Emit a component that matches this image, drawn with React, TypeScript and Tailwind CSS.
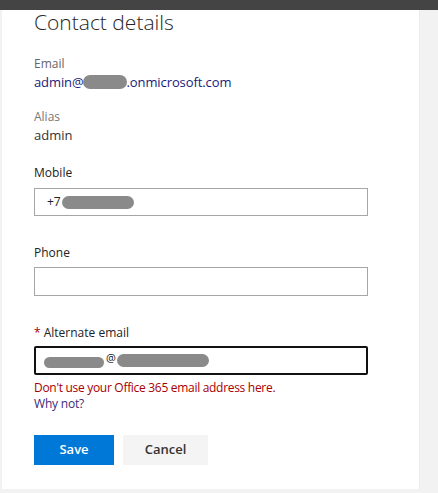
import React from "react";

const Blur = ({ className }: { className: string }) => (
  <span className={`inline-block rounded-full bg-[#8a8a8a] blur-[0.6px] ${className}`} />
);

export default function App() {
  return (
    <div className="w-[438px] h-[493px] bg-[#f2f2f2] flex flex-col overflow-hidden" style={{ fontFamily: '"Open Sans", "Noto Sans", sans-serif' }}>
      <div className="h-[10px] bg-[#444444] shrink-0" />
      <div className="ml-[2px] w-[418px] h-[479px] bg-white border-r border-[#ececec] pl-[32px] flex flex-col">
        <div className="text-[21px] font-light text-[#262626] leading-[24px] tracking-[0px]">Contact details</div>

        <div className="mt-[22px] text-[12px] leading-[16px] text-[#666]">Email</div>
        <div className="mt-[1px] text-[13px] leading-[18px] text-[#1a1a7a] flex items-center tracking-[-0.1px]">
          <span>admin@</span>
          <Blur className="w-[44px] h-[14px] ml-[-1px]" />
          <span>.onmicrosoft.com</span>
        </div>

        <div className="mt-[18px] text-[12px] leading-[16px] text-[#777]">Alias</div>
        <div className="mt-[1px] text-[13px] leading-[18px] text-[#333]">admin</div>

        <div className="mt-[21px] text-[12px] leading-[16px] text-[#222]">Mobile</div>
        <div className="mt-[7px] w-[334px] h-[28px] border border-[#a6a6a6] flex items-center pl-[12px] text-[12px] text-[#222]">
          <span>+7</span>
          <Blur className="w-[72px] h-[13px] ml-[1px]" />
        </div>

        <div className="mt-[29px] text-[12px] leading-[16px] text-[#222]">Phone</div>
        <div className="mt-[6px] w-[334px] h-[29px] border border-[#a6a6a6]" />

        <div className="mt-[29px] text-[12px] leading-[16px] text-[#222]">
          <span className="text-[#a80000]">*</span> Alternate email
        </div>
        <div className="mt-[5px] w-[334px] h-[29px] border-2 border-[#111] rounded-[2px] flex items-center pl-[8px] text-[11px] text-[#111]">
          <Blur className="w-[60px] h-[11px] mt-[4px]" />
          <span className="ml-[2px] mt-[-4px]">@</span>
          <Blur className="w-[92px] h-[13px] ml-[1px]" />
        </div>

        <div className="mt-[5px] text-[12px] leading-[16px] text-[#a80000] tracking-[-0.3px]">Don't use your Office 365 email address here.</div>
        <div className="text-[12px] leading-[16px] text-[#3c2a78] tracking-[-0.2px]">Why not?</div>

        <div className="mt-[23px] flex gap-[9px]">
          <div className="w-[80px] h-[30px] bg-[#0078d7] text-white text-[13px] font-semibold flex items-center justify-center">Save</div>
          <div className="w-[85px] h-[30px] bg-[#f4f4f4] text-[#333] text-[13px] font-semibold flex items-center justify-center">Cancel</div>
        </div>
      </div>
    </div>
  );
}
